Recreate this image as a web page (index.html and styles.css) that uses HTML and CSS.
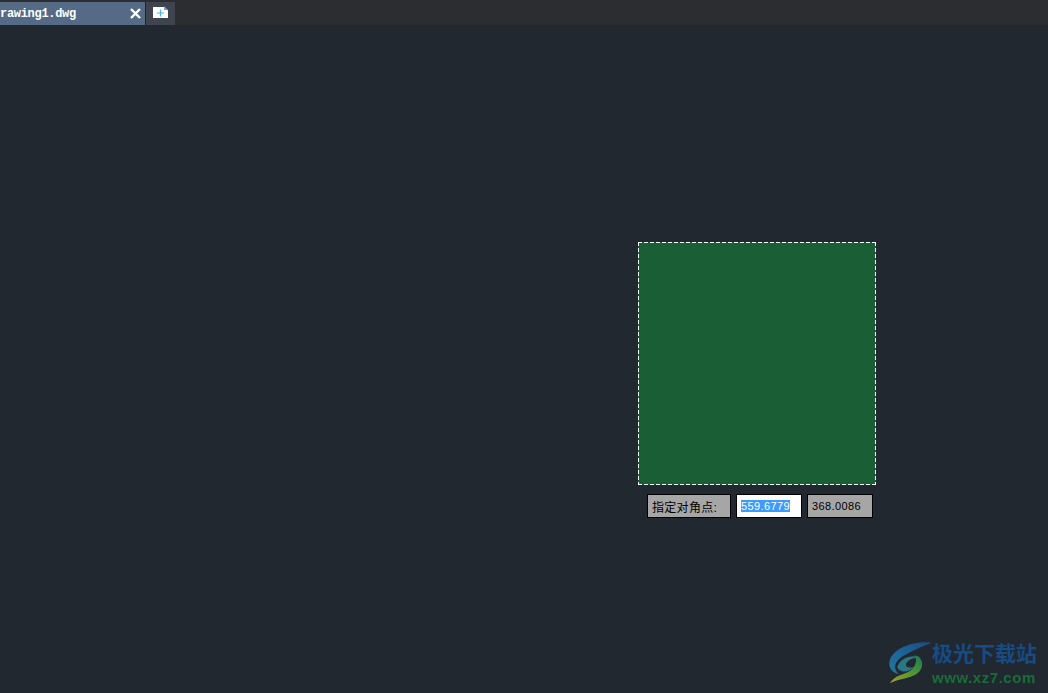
FILE: index.html
```html
<!DOCTYPE html>
<html lang="en">
<head>
    <meta charset="UTF-8">
    <meta name="viewport" content="width=device-width, initial-scale=1.0">
    <title>Drawing1.dwg</title>
    <link rel="stylesheet" href="styles.css">
</head>
<body>
    <div class="tabbar">
        <div class="tab">
            <span class="tab-name">rawing1.dwg</span>
            <svg class="tab-close" width="11" height="11" viewBox="0 0 11 11"><path d="M1 1 L10 10 M10 1 L1 10" stroke="#fff" stroke-width="2.4" fill="none"/></svg>
        </div>
        <div class="tab-new">
            <svg width="15" height="12" viewBox="0 0 15 12">
                <path d="M0 1 H11 L15 4.5 V12 H0 Z" fill="#fff"/>
                <path d="M11 0 L15 4 H11 Z" fill="#6aa6d8"/>
                <path d="M7.5 3.5 V10.5 M4 7 H11" stroke="#4ab0f5" stroke-width="1.2" fill="none"/>
            </svg>
        </div>
    </div>

    <div class="canvas">
        <div class="selection"></div>
        <div class="dyn-input">
            <div class="dyn-label">指定对角点:</div>
            <div class="dyn-field dyn-active"><span class="dyn-selected">559.6779</span></div>
            <div class="dyn-field">368.0086</div>
        </div>

        <div class="watermark">
            <svg class="wm-logo" width="56" height="50" viewBox="0 0 168 150">
                <defs>
                    <linearGradient id="wm-blue" x1="1" y1="0" x2="0" y2="1">
                        <stop offset="0" stop-color="#1d4f86"/>
                        <stop offset="0.6" stop-color="#1c6fa8"/>
                        <stop offset="1" stop-color="#2a7f9c"/>
                    </linearGradient>
                    <linearGradient id="wm-green" x1="0.8" y1="0" x2="0.1" y2="1">
                        <stop offset="0" stop-color="#1f8a55"/>
                        <stop offset="0.55" stop-color="#63a533"/>
                        <stop offset="1" stop-color="#a5a82c"/>
                    </linearGradient>
                </defs>
                <path d="M144 14 C95 8 48 24 26 50 C8 72 14 102 44 108 C26 92 32 70 56 55 C80 40 112 26 144 14 Z" fill="url(#wm-blue)"/>
                <path d="M40 86 C48 60 84 48 112 58 C90 58 70 66 66 78 C64 88 76 92 90 86 C78 104 44 106 40 86 Z" fill="#2b8090"/>
                <path d="M92 52 C120 58 122 92 98 108 C76 122 44 122 18 136 C32 112 58 110 76 100 C92 90 102 72 92 52 Z" fill="url(#wm-green)"/>
            </svg>
            <div class="wm-text">
                <div class="wm-name">极光下载站</div>
                <div class="wm-url">www.xz7.com</div>
            </div>
        </div>
    </div>
</body>
</html>
```

FILE: styles.css
```css
html, body { margin: 0; height: 100%; overflow: hidden; }
body { background-color: #212830; display: flex; flex-direction: column; font-family: "Liberation Sans", "Noto Sans CJK SC", sans-serif; }

.tabbar {
    height: 23px;
    padding-top: 2px;
    display: flex;
    flex: none;
    background-color: #2b2d31;
}
.tab {
    width: 146px;
    display: flex;
    align-items: center;
    justify-content: space-between;
    padding-right: 4px;
    box-sizing: border-box;
    background-color: #546a85;
    border-right: 1px solid #20262e;
}
.tab-name {
    font-family: "Liberation Mono", monospace;
    font-size: 12px;
    font-weight: bold;
    letter-spacing: -0.3px;
    color: #fff;
    white-space: nowrap;
}
.tab-close { flex: none; }
.tab-new {
    width: 29px;
    display: flex;
    align-items: center;
    justify-content: center;
    padding-bottom: 4px;
    box-sizing: border-box;
    background-color: #3f444e;
}

.canvas { position: relative; flex: 1; }

.selection {
    position: absolute;
    left: 638px;
    top: 217px;
    width: 238px;
    height: 243px;
    background:
        repeating-linear-gradient(90deg, #fff 0 4px, transparent 4px 6px) top / 100% 1px no-repeat,
        repeating-linear-gradient(90deg, #fff 0 4px, transparent 4px 6px) bottom / 100% 1px no-repeat,
        repeating-linear-gradient(180deg, #fff 0 4px, transparent 4px 6px) left / 1px 100% no-repeat,
        repeating-linear-gradient(180deg, #fff 0 4px, transparent 4px 6px) right / 1px 100% no-repeat,
        #195e34;
}

.dyn-input {
    position: absolute;
    left: 647px;
    top: 469px;
    display: flex;
    gap: 5px;
    font-size: 11px;
    color: #000;
}
.dyn-label, .dyn-field {
    height: 24px;
    box-sizing: border-box;
    border: 1px solid #000;
    background-color: #a6a6a6;
    display: flex;
    align-items: center;
    padding-left: 4px;
    white-space: nowrap;
}
.dyn-label { width: 84px; font-size: 12px; letter-spacing: 0.3px; }
.dyn-field { width: 66px; letter-spacing: 0.4px; }
.dyn-active { background-color: #fff; }
.dyn-selected { background-color: #3d9bff; color: #fff; }

.watermark {
    position: absolute;
    left: 884px;
    top: 613px;
    display: flex;
    opacity: 0.9;
}
.wm-logo { margin-right: -8px; }
.wm-text { display: flex; flex-direction: column; margin-top: 4px; }
.wm-name { font-size: 21px; line-height: 24px; font-weight: bold; color: #14508f; white-space: nowrap; }
.wm-url { margin-top: 2px; font-size: 15px; line-height: 19px; font-weight: bold; color: #17743a; letter-spacing: 0.55px; white-space: nowrap; }
```
